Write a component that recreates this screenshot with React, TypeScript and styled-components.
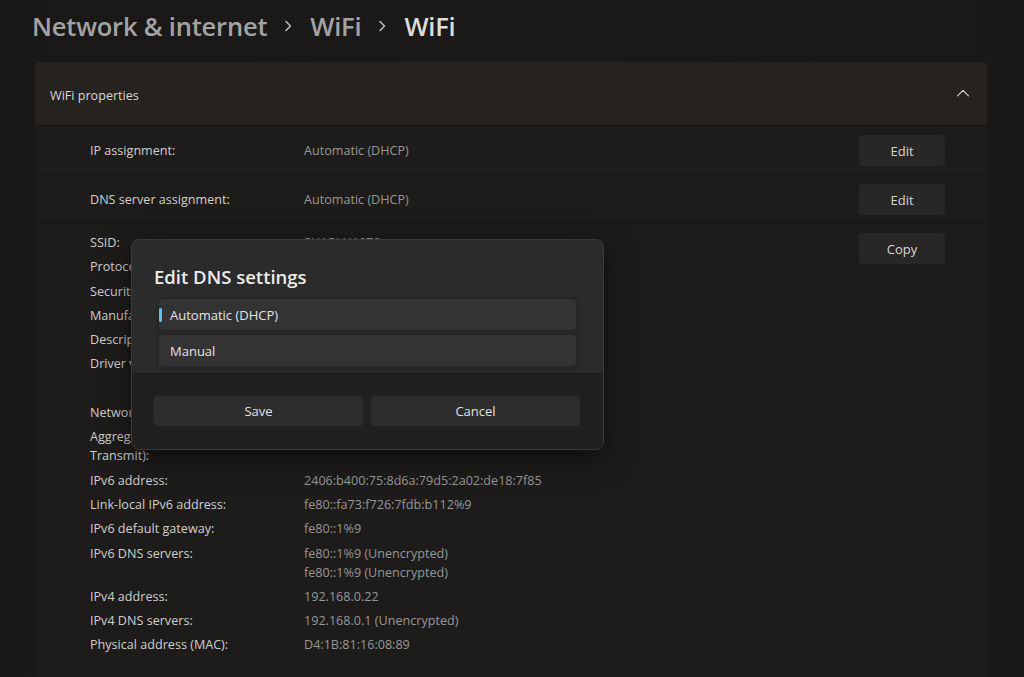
import React from 'react'
import styled, { createGlobalStyle } from 'styled-components'

const GlobalStyle = createGlobalStyle`
  html, body {
    margin: 0;
    padding: 0;
    height: 100%;
    overflow: hidden;
    background: #1b1917;
  }
  body {
    font-family: "Open Sans", "Noto Sans", sans-serif;
    color: #d4d4d4;
  }
`

const Page = styled.div`
  position: relative;
  height: 677px;
  padding: 8px 37px 0 35px;
  box-sizing: border-box;
  overflow: hidden;
  background: linear-gradient(90deg, #1a1817 0%, #1c1a18 50%, #191816 100%);
`

const Breadcrumb = styled.h1`
  margin: 0 0 18px -3px;
  display: flex;
  align-items: center;
  gap: 17px;
  height: 36px;
  font-size: 25.5px;
  font-weight: 600;
  letter-spacing: -0.2px;
  color: #a3a3a3;

  span.current {
    color: #dcdcdc;
  }
`

const Card = styled.section`
  border-radius: 5px;
  overflow: hidden;
  background: #1e1c1a;
  min-height: 700px;
`

const CardHeader = styled.div`
  height: 64px;
  box-sizing: border-box;
  display: flex;
  align-items: center;
  justify-content: space-between;
  padding: 3px 17px 0 15px;
  background: #252220;
  border-bottom: 1px solid #191715;
  font-size: 12.6px;
  color: #d8d8d8;

  svg {
    margin-top: -4px;
  }
`

const SettingRow = styled.div`
  height: 47px;
  display: grid;
  grid-template-columns: 200px 1fr auto;
  column-gap: 14px;
  align-items: center;
  padding: 1px 42px 0 55px;
  border-bottom: 1px solid #171614;
  font-size: 12.6px;
`

const Label = styled.div`
  color: #cfcfcf;
  line-height: 19px;
`

const Value = styled.div`
  color: #979797;
  line-height: 19px;
`

const GhostButton = styled.button`
  width: 86px;
  height: 31px;
  border: none;
  border-radius: 4px;
  background: #292725;
  color: #d6d6d6;
  font-family: inherit;
  font-size: 13px;
  cursor: pointer;
`

const Details = styled.div`
  display: flex;
  align-items: flex-start;
  padding: 9px 42px 24px 55px;
`

const DetailGrid = styled.div`
  flex: 1;
  display: grid;
  grid-template-columns: 200px 1fr;
  column-gap: 14px;
  row-gap: 5.3px;
  font-size: 12.6px;
`

const Spacer = styled.div`
  grid-column: 1 / -1;
  height: 19px;
`

const Overlay = styled.div`
  position: absolute;
  left: 131px;
  top: 239px;
  width: 473px;
  height: 211px;
  box-sizing: border-box;
  border: 1px solid #3a3a3a;
  border-radius: 8px;
  overflow: hidden;
  display: flex;
  flex-direction: column;
  background: #2b2b2b;
  box-shadow: 0 8px 28px rgba(0, 0, 0, 0.55);
`

const DialogBody = styled.div`
  flex: 1;
  padding: 23px 23px 0 24px;
`

const DialogTitle = styled.h2`
  margin: 0 0 6px -2px;
  font-size: 18.5px;
  line-height: 28px;
  font-weight: 600;
  color: #ececec;
`

const OptionList = styled.div`
  width: 424px;
  box-sizing: border-box;
  padding: 2px 4px 5px 3px;
  border-radius: 6px;
  background: #272727;
  display: flex;
  flex-direction: column;
  gap: 5px;
`

const Option = styled.div<{ $selected?: boolean }>`
  position: relative;
  height: 31px;
  display: flex;
  align-items: center;
  padding-left: 11px;
  border-radius: 4px;
  background: #333333;
  font-size: 13px;
  color: #e4e4e4;

  &::before {
    content: '';
    display: ${p => (p.$selected ? 'block' : 'none')};
    position: absolute;
    left: 0;
    top: 9px;
    width: 3px;
    height: 14px;
    border-radius: 2px;
    background: #60c0f4;
  }
`

const DialogFooter = styled.div`
  height: 76px;
  box-sizing: border-box;
  display: grid;
  grid-template-columns: 1fr 1fr;
  column-gap: 8px;
  padding: 22px 23px 0 22px;
  background: #202020;
  border-top: 1px solid #1b1b1b;
`

const FooterButton = styled.button`
  height: 30px;
  border: none;
  border-radius: 4px;
  background: #2d2d2d;
  color: #e2e2e2;
  font-family: inherit;
  font-size: 13px;
`

const Chevron = () => (
  <svg width="9" height="12" viewBox="0 0 9 12" fill="none">
    <path d="M2 1.5 L6.5 6 L2 10.5" stroke="#b8b8b8" strokeWidth="1.6" strokeLinecap="round" strokeLinejoin="round" />
  </svg>
)

const ChevronUp = () => (
  <svg width="14" height="8" viewBox="0 0 14 8" fill="none">
    <path d="M1.5 6.8 L7 1.3 L12.5 6.8" stroke="#cfcfcf" strokeWidth="1.2" strokeLinecap="round" strokeLinejoin="round" />
  </svg>
)

const details: Array<[string, string[]] | null> = [
  ['SSID:', ['SHAPLN1078']],
  ['Protocol:', ['Wi-Fi 5 (802.11ac)']],
  ['Security type:', ['WPA2-Personal']],
  ['Manufacturer:', ['Intel Corporation']],
  ['Description:', ['Intel(R) Wi-Fi 6 AX201 160MHz']],
  ['Driver version:', ['22.110.1.1']],
  null,
  ['Network band:', ['5 GHz']],
  ['Aggregated link speed (Receive/\u200BTransmit):', ['866/866 (Mbps)']],
  ['IPv6 address:', ['2406:b400:75:8d6a:79d5:2a02:de18:7f85']],
  ['Link-local IPv6 address:', ['fe80::fa73:f726:7fdb:b112%9']],
  ['IPv6 default gateway:', ['fe80::1%9']],
  ['IPv6 DNS servers:', ['fe80::1%9 (Unencrypted)', 'fe80::1%9 (Unencrypted)']],
  ['IPv4 address:', ['192.168.0.22']],
  ['IPv4 DNS servers:', ['192.168.0.1 (Unencrypted)']],
  ['Physical address (MAC):', ['D4:1B:81:16:08:89']],
]

export default function App() {
  return (
    <Page>
      <GlobalStyle />
      <Breadcrumb>
        <span>Network &amp; internet</span>
        <Chevron />
        <span>WiFi</span>
        <Chevron />
        <span className="current">WiFi</span>
      </Breadcrumb>

      <Card>
        <CardHeader>
          <span>WiFi properties</span>
          <ChevronUp />
        </CardHeader>

        <SettingRow>
          <Label>IP assignment:</Label>
          <Value>Automatic (DHCP)</Value>
          <GhostButton>Edit</GhostButton>
        </SettingRow>
        <SettingRow>
          <Label>DNS server assignment:</Label>
          <Value>Automatic (DHCP)</Value>
          <GhostButton>Edit</GhostButton>
        </SettingRow>

        <Details>
          <DetailGrid>
            {details.map((d, i) =>
              d === null ? (
                <Spacer key={i} />
              ) : (
                <React.Fragment key={i}>
                  <Label>{d[0]}</Label>
                  <Value>
                    {d[1].map(v => (
                      <div key={v + i}>{v}</div>
                    ))}
                  </Value>
                </React.Fragment>
              )
            )}
          </DetailGrid>
          <GhostButton>Copy</GhostButton>
        </Details>
      </Card>

      <Overlay>
        <DialogBody>
          <DialogTitle>Edit DNS settings</DialogTitle>
          <OptionList>
            <Option $selected>Automatic (DHCP)</Option>
            <Option>Manual</Option>
          </OptionList>
        </DialogBody>
        <DialogFooter>
          <FooterButton>Save</FooterButton>
          <FooterButton>Cancel</FooterButton>
        </DialogFooter>
      </Overlay>
    </Page>
  )
}
